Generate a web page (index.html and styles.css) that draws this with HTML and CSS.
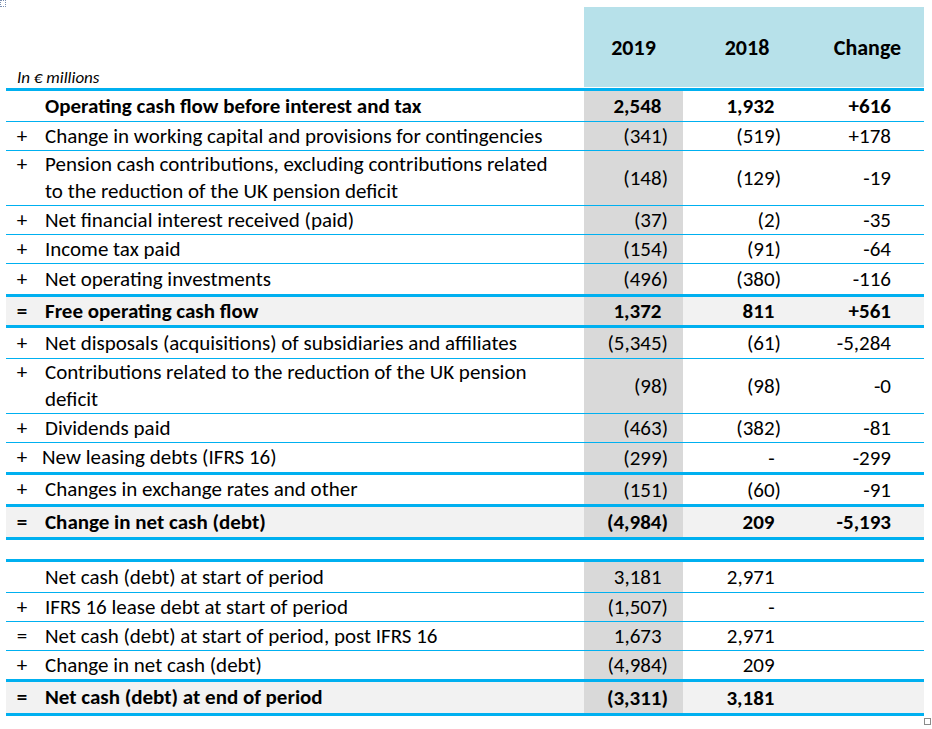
FILE: index.html
```html
<!DOCTYPE html>
<html lang="en">
<head>
<meta charset="utf-8">
<title>Cash flow</title>
<link rel="stylesheet" href="styles.css">
</head>
<body>
<div class="mark-tl"></div>
<div class="sheet">
  <div class="head">
    <div class="unit">In € millions</div>
    <div class="hcell">2019</div>
    <div class="hcell">2018</div>
    <div class="hcell">Change</div>
  </div>

  <div class="row h31 bold">
    <div class="sign"></div><div class="label">Operating cash flow before interest and tax</div>
    <div class="num c19"><span class="pos">2,548</span></div><div class="num c18"><span class="pos">1,932</span></div><div class="num cch">+616</div>
  </div>
  <div class="row">
    <div class="sign">+</div><div class="label">Change in working capital and provisions for contingencies</div>
    <div class="num c19">(341)</div><div class="num c18">(519)</div><div class="num cch">+178</div>
  </div>
  <div class="row h55">
    <div class="sign">+</div><div class="label">Pension cash contributions, excluding contributions related<br>to the reduction of the UK pension deficit</div>
    <div class="num c19">(148)</div><div class="num c18">(129)</div><div class="num cch">-19</div>
  </div>
  <div class="row">
    <div class="sign">+</div><div class="label">Net financial interest received (paid)</div>
    <div class="num c19">(37)</div><div class="num c18">(2)</div><div class="num cch">-35</div>
  </div>
  <div class="row">
    <div class="sign">+</div><div class="label">Income tax paid</div>
    <div class="num c19">(154)</div><div class="num c18">(91)</div><div class="num cch">-64</div>
  </div>
  <div class="row h33 thick">
    <div class="sign">+</div><div class="label">Net operating investments</div>
    <div class="num c19">(496)</div><div class="num c18">(380)</div><div class="num cch">-116</div>
  </div>
  <div class="row h31 thick hl bold">
    <div class="sign">=</div><div class="label">Free operating cash flow</div>
    <div class="num c19"><span class="pos">1,372</span></div><div class="num c18"><span class="pos">811</span></div><div class="num cch">+561</div>
  </div>
  <div class="row h31">
    <div class="sign">+</div><div class="label">Net disposals (acquisitions) of subsidiaries and affiliates</div>
    <div class="num c19">(5,345)</div><div class="num c18">(61)</div><div class="num cch">-5,284</div>
  </div>
  <div class="row h55">
    <div class="sign">+</div><div class="label">Contributions related to the reduction of the UK pension<br>deficit</div>
    <div class="num c19">(98)</div><div class="num c18">(98)</div><div class="num cch">-0</div>
  </div>
  <div class="row">
    <div class="sign">+</div><div class="label">Dividends paid</div>
    <div class="num c19">(463)</div><div class="num c18">(382)</div><div class="num cch">-81</div>
  </div>
  <div class="row h32 thick">
    <div class="sign">+</div><div class="label shift">New leasing debts (IFRS 16)</div>
    <div class="num c19">(299)</div><div class="num c18"><span class="pos">-</span></div><div class="num cch">-299</div>
  </div>
  <div class="row h32 thick">
    <div class="sign">+</div><div class="label">Changes in exchange rates and other</div>
    <div class="num c19">(151)</div><div class="num c18">(60)</div><div class="num cch">-91</div>
  </div>
  <div class="row h33 thick hl bold">
    <div class="sign">=</div><div class="label">Change in net cash (debt)</div>
    <div class="num c19">(4,984)</div><div class="num c18"><span class="pos">209</span></div><div class="num cch">-5,193</div>
  </div>

  <div class="gap"></div>

  <div class="row h31">
    <div class="sign"></div><div class="label">Net cash (debt) at start of period</div>
    <div class="num c19"><span class="pos">3,181</span></div><div class="num c18"><span class="pos">2,971</span></div><div class="num cch"></div>
  </div>
  <div class="row">
    <div class="sign">+</div><div class="label">IFRS 16 lease debt at start of period</div>
    <div class="num c19">(1,507)</div><div class="num c18"><span class="pos">-</span></div><div class="num cch"></div>
  </div>
  <div class="row">
    <div class="sign">=</div><div class="label">Net cash (debt) at start of period, post IFRS 16</div>
    <div class="num c19"><span class="pos">1,673</span></div><div class="num c18"><span class="pos">2,971</span></div><div class="num cch"></div>
  </div>
  <div class="row h31 thick">
    <div class="sign">+</div><div class="label">Change in net cash (debt)</div>
    <div class="num c19">(4,984)</div><div class="num c18"><span class="pos">209</span></div><div class="num cch"></div>
  </div>
  <div class="row h34 thick hl bold">
    <div class="sign">=</div><div class="label">Net cash (debt) at end of period</div>
    <div class="num c19">(3,311)</div><div class="num c18"><span class="pos">3,181</span></div><div class="num cch"></div>
  </div>
</div>
<div class="mark-br"></div>
</body>
</html>
```

FILE: styles.css
```css
html, body {
  margin: 0;
  padding: 0;
  background: #ffffff;
}
body {
  position: relative;
  width: 932px;
  height: 729px;
  overflow: hidden;
  font-family: Carlito, Calibri, Lato, "Liberation Sans", sans-serif;
  color: #000000;
  font-size: 21px;
}
.sheet {
  margin-left: 6px;
  width: 918px;
}
.head {
  display: grid;
  grid-template-columns: 578px 99px 128px 113px;
  height: 91px;
  padding-top: 7px;
  box-sizing: border-box;
  border-bottom: 3px solid #00b0f0;
}
.unit {
  align-self: end;
  padding: 0 0 0 11px;
  font-style: italic;
  font-size: 17px;
}
.hcell {
  background: #b7e1ea;
  display: flex;
  align-items: center;
  justify-content: center;
  font-weight: bold;
  font-size: 22px;
  margin-bottom: 1px;
}
.row {
  display: grid;
  grid-template-columns: 39px 539px 99px 128px 113px;
  height: 29px;
  box-sizing: border-box;
  border-bottom: 1px solid #00b0f0;
}
.row.h31 { height: 31px; }
.row.h32 { height: 32px; }
.row.h33 { height: 33px; }
.row.h34 { height: 34px; }
.row.h55 { height: 55px; }
.row.thick { border-bottom-width: 3px; }
.row.hl { background: #f2f2f2; }
.row.bold { font-weight: bold; }
.sign {
  display: flex;
  align-items: center;
  justify-content: center;
  padding-right: 7px;
  line-height: 27px;
}
.row.h55 .sign {
  align-items: flex-start;
}
.label {
  display: flex;
  align-items: center;
  line-height: 27px;
  white-space: nowrap;
}
.label.shift { margin-left: -3px; }
.num {
  display: flex;
  align-items: center;
  justify-content: flex-end;
  white-space: nowrap;
}
.c19 {
  background: #d9d9d9;
  padding-right: 15px;
}
.c18 { padding-right: 30px; }
.cch { padding-right: 33px; }
.pos::after {
  content: ")";
  visibility: hidden;
}
.gap {
  height: 22px;
  box-sizing: border-box;
  border-bottom: 3px solid #00b0f0;
}
.mark-tl {
  position: absolute;
  left: 0;
  top: 0;
  width: 4px;
  height: 5px;
  border: 1px dotted #7a8fb0;
}
.mark-br {
  position: absolute;
  left: 924px;
  top: 718px;
  width: 5px;
  height: 5px;
  border: 1px solid #8a8a8a;
  background: #fff;
}
```
